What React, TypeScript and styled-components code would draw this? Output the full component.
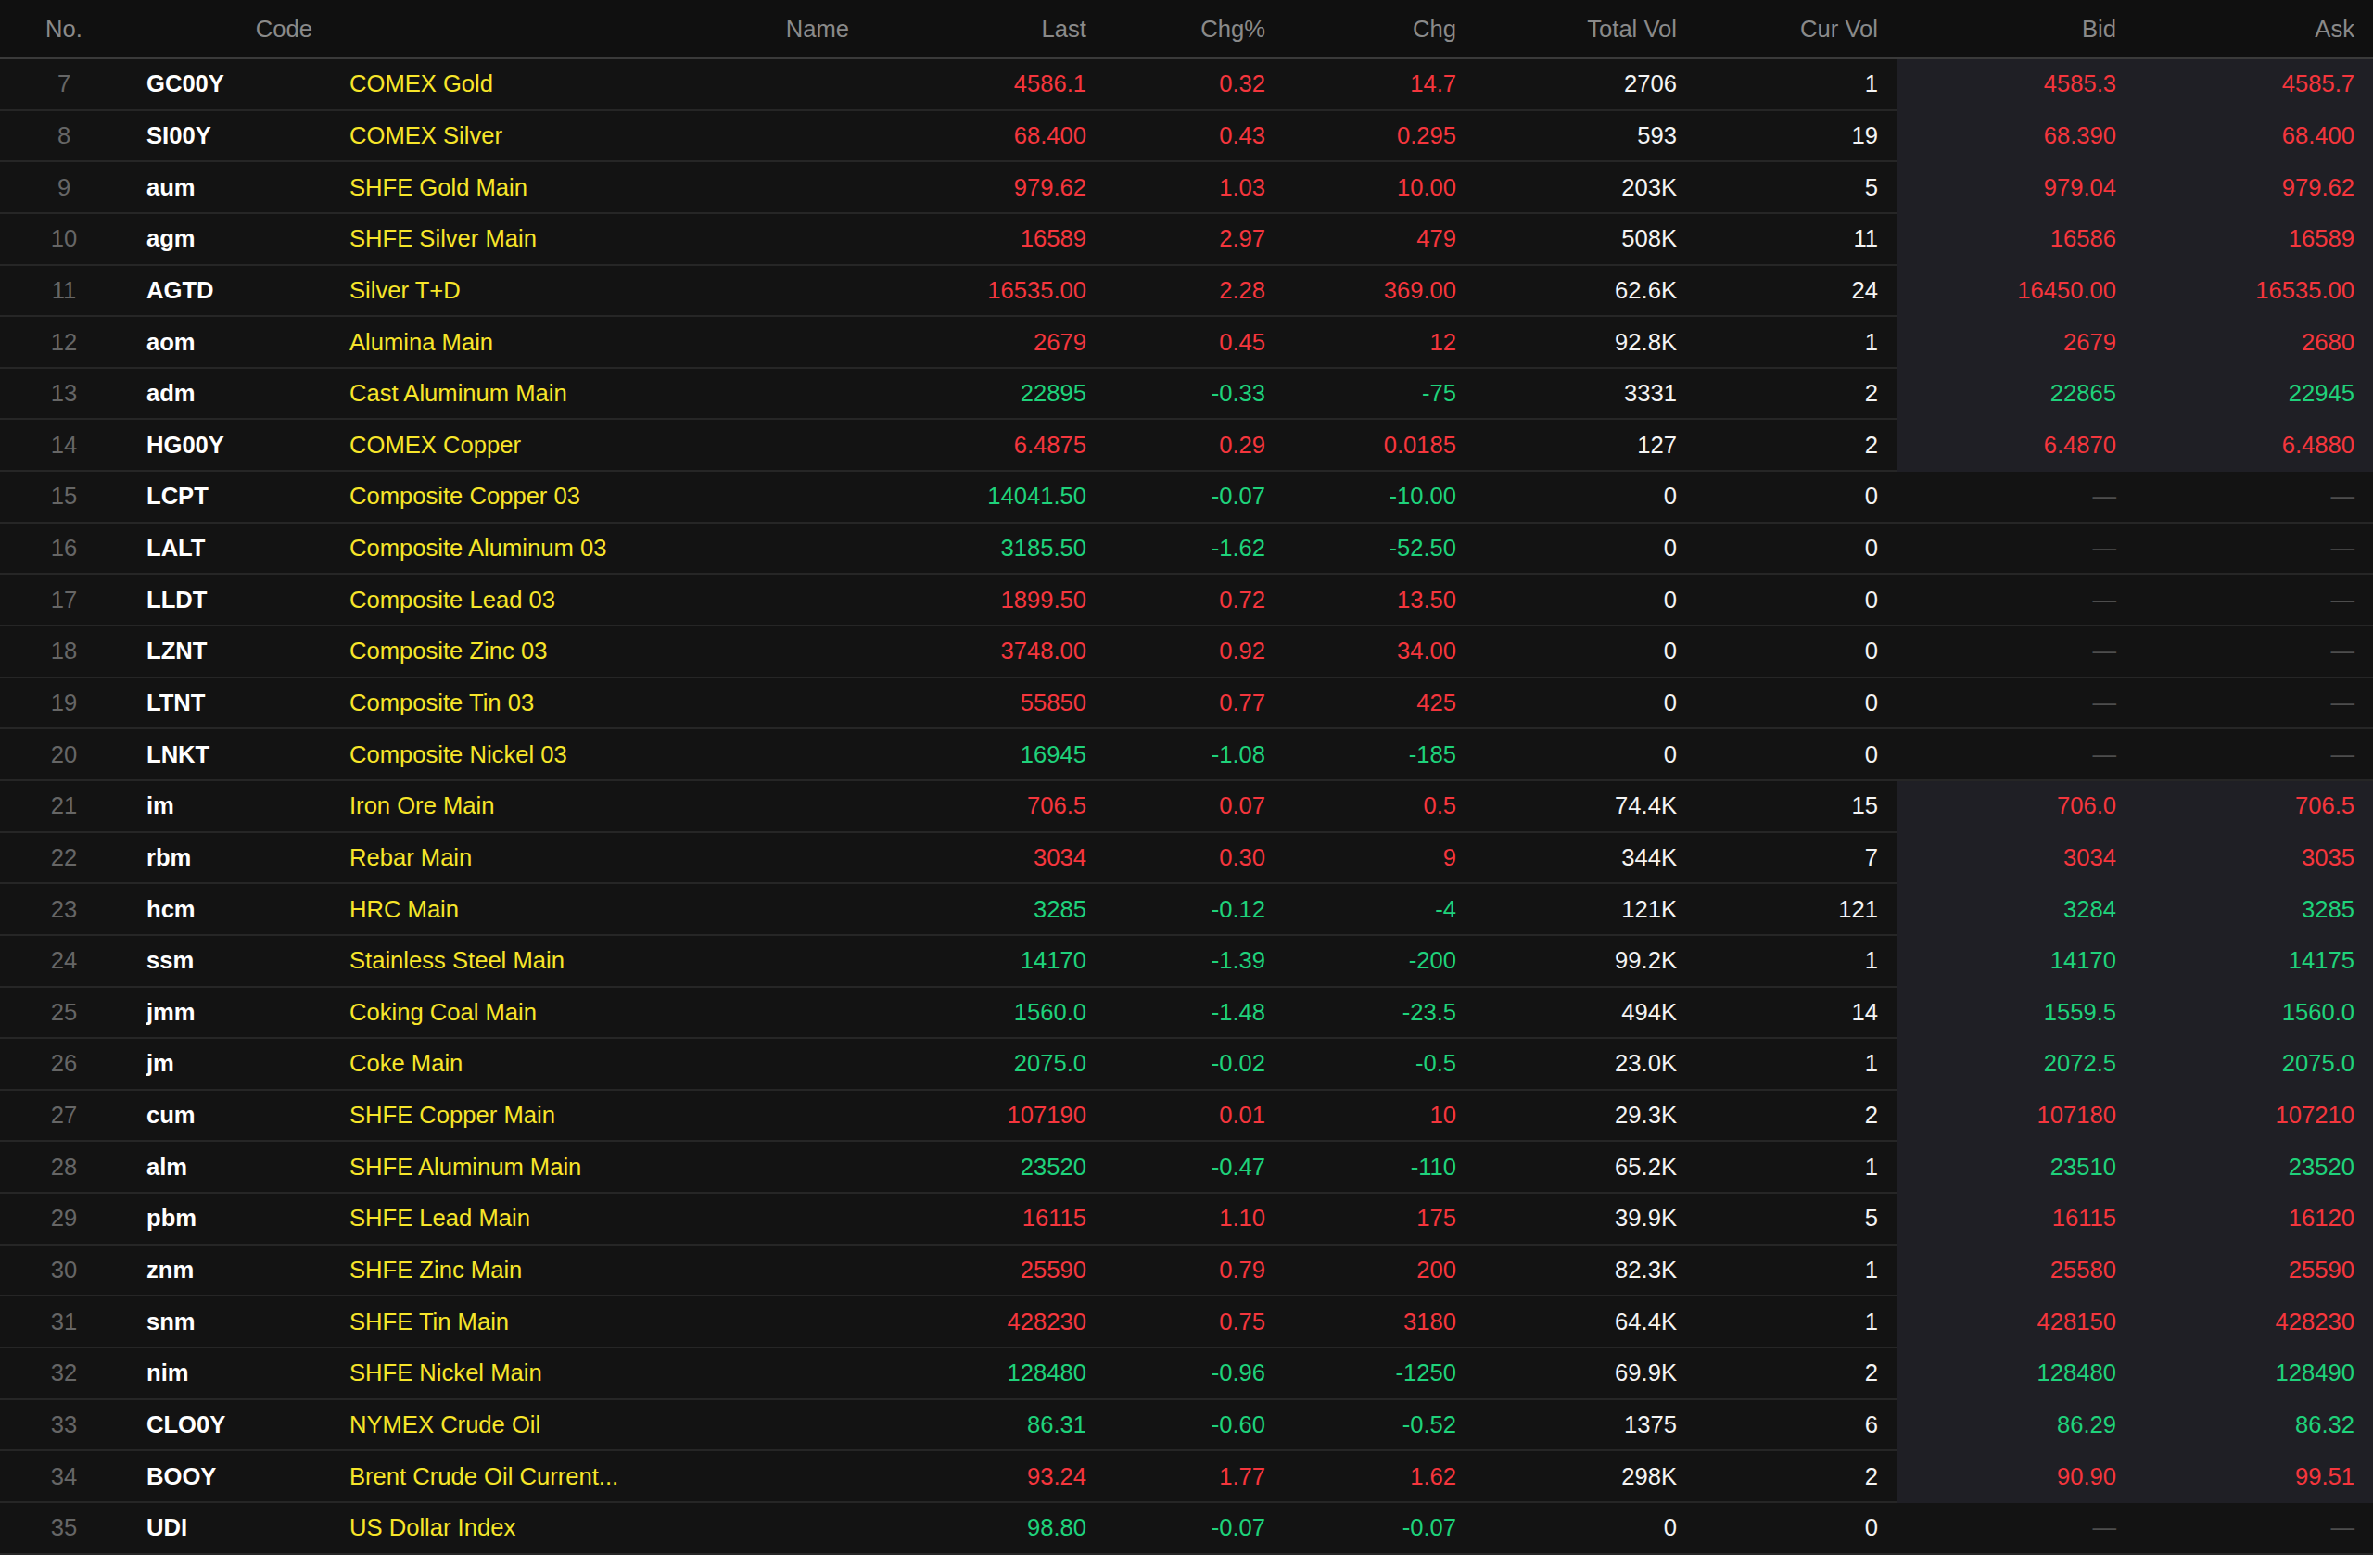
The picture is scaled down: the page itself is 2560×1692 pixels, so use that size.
import React from 'react'
import styled, { createGlobalStyle } from 'styled-components'

type Dir = 'up' | 'down'

type Quote = {
  no: number
  code: string
  name: string
  last: string
  pct: string
  chg: string
  totalVol: string
  curVol: string
  bid?: string
  ask?: string
  dir: Dir
}

const quotes: Quote[] = [
  { no: 7, code: 'GC00Y', name: 'COMEX Gold', last: '4586.1', pct: '0.32', chg: '14.7', totalVol: '2706', curVol: '1', bid: '4585.3', ask: '4585.7', dir: 'up' },
  { no: 8, code: 'SI00Y', name: 'COMEX Silver', last: '68.400', pct: '0.43', chg: '0.295', totalVol: '593', curVol: '19', bid: '68.390', ask: '68.400', dir: 'up' },
  { no: 9, code: 'aum', name: 'SHFE Gold Main', last: '979.62', pct: '1.03', chg: '10.00', totalVol: '203K', curVol: '5', bid: '979.04', ask: '979.62', dir: 'up' },
  { no: 10, code: 'agm', name: 'SHFE Silver Main', last: '16589', pct: '2.97', chg: '479', totalVol: '508K', curVol: '11', bid: '16586', ask: '16589', dir: 'up' },
  { no: 11, code: 'AGTD', name: 'Silver T+D', last: '16535.00', pct: '2.28', chg: '369.00', totalVol: '62.6K', curVol: '24', bid: '16450.00', ask: '16535.00', dir: 'up' },
  { no: 12, code: 'aom', name: 'Alumina Main', last: '2679', pct: '0.45', chg: '12', totalVol: '92.8K', curVol: '1', bid: '2679', ask: '2680', dir: 'up' },
  { no: 13, code: 'adm', name: 'Cast Aluminum Main', last: '22895', pct: '-0.33', chg: '-75', totalVol: '3331', curVol: '2', bid: '22865', ask: '22945', dir: 'down' },
  { no: 14, code: 'HG00Y', name: 'COMEX Copper', last: '6.4875', pct: '0.29', chg: '0.0185', totalVol: '127', curVol: '2', bid: '6.4870', ask: '6.4880', dir: 'up' },
  { no: 15, code: 'LCPT', name: 'Composite Copper 03', last: '14041.50', pct: '-0.07', chg: '-10.00', totalVol: '0', curVol: '0', dir: 'down' },
  { no: 16, code: 'LALT', name: 'Composite Aluminum 03', last: '3185.50', pct: '-1.62', chg: '-52.50', totalVol: '0', curVol: '0', dir: 'down' },
  { no: 17, code: 'LLDT', name: 'Composite Lead 03', last: '1899.50', pct: '0.72', chg: '13.50', totalVol: '0', curVol: '0', dir: 'up' },
  { no: 18, code: 'LZNT', name: 'Composite Zinc 03', last: '3748.00', pct: '0.92', chg: '34.00', totalVol: '0', curVol: '0', dir: 'up' },
  { no: 19, code: 'LTNT', name: 'Composite Tin 03', last: '55850', pct: '0.77', chg: '425', totalVol: '0', curVol: '0', dir: 'up' },
  { no: 20, code: 'LNKT', name: 'Composite Nickel 03', last: '16945', pct: '-1.08', chg: '-185', totalVol: '0', curVol: '0', dir: 'down' },
  { no: 21, code: 'im', name: 'Iron Ore Main', last: '706.5', pct: '0.07', chg: '0.5', totalVol: '74.4K', curVol: '15', bid: '706.0', ask: '706.5', dir: 'up' },
  { no: 22, code: 'rbm', name: 'Rebar Main', last: '3034', pct: '0.30', chg: '9', totalVol: '344K', curVol: '7', bid: '3034', ask: '3035', dir: 'up' },
  { no: 23, code: 'hcm', name: 'HRC Main', last: '3285', pct: '-0.12', chg: '-4', totalVol: '121K', curVol: '121', bid: '3284', ask: '3285', dir: 'down' },
  { no: 24, code: 'ssm', name: 'Stainless Steel Main', last: '14170', pct: '-1.39', chg: '-200', totalVol: '99.2K', curVol: '1', bid: '14170', ask: '14175', dir: 'down' },
  { no: 25, code: 'jmm', name: 'Coking Coal Main', last: '1560.0', pct: '-1.48', chg: '-23.5', totalVol: '494K', curVol: '14', bid: '1559.5', ask: '1560.0', dir: 'down' },
  { no: 26, code: 'jm', name: 'Coke Main', last: '2075.0', pct: '-0.02', chg: '-0.5', totalVol: '23.0K', curVol: '1', bid: '2072.5', ask: '2075.0', dir: 'down' },
  { no: 27, code: 'cum', name: 'SHFE Copper Main', last: '107190', pct: '0.01', chg: '10', totalVol: '29.3K', curVol: '2', bid: '107180', ask: '107210', dir: 'up' },
  { no: 28, code: 'alm', name: 'SHFE Aluminum Main', last: '23520', pct: '-0.47', chg: '-110', totalVol: '65.2K', curVol: '1', bid: '23510', ask: '23520', dir: 'down' },
  { no: 29, code: 'pbm', name: 'SHFE Lead Main', last: '16115', pct: '1.10', chg: '175', totalVol: '39.9K', curVol: '5', bid: '16115', ask: '16120', dir: 'up' },
  { no: 30, code: 'znm', name: 'SHFE Zinc Main', last: '25590', pct: '0.79', chg: '200', totalVol: '82.3K', curVol: '1', bid: '25580', ask: '25590', dir: 'up' },
  { no: 31, code: 'snm', name: 'SHFE Tin Main', last: '428230', pct: '0.75', chg: '3180', totalVol: '64.4K', curVol: '1', bid: '428150', ask: '428230', dir: 'up' },
  { no: 32, code: 'nim', name: 'SHFE Nickel Main', last: '128480', pct: '-0.96', chg: '-1250', totalVol: '69.9K', curVol: '2', bid: '128480', ask: '128490', dir: 'down' },
  { no: 33, code: 'CLO0Y', name: 'NYMEX Crude Oil', last: '86.31', pct: '-0.60', chg: '-0.52', totalVol: '1375', curVol: '6', bid: '86.29', ask: '86.32', dir: 'down' },
  { no: 34, code: 'BOOY', name: 'Brent Crude Oil Current...', last: '93.24', pct: '1.77', chg: '1.62', totalVol: '298K', curVol: '2', bid: '90.90', ask: '99.51', dir: 'up' },
  { no: 35, code: 'UDI', name: 'US Dollar Index', last: '98.80', pct: '-0.07', chg: '-0.07', totalVol: '0', curVol: '0', dir: 'down' },
]

const colors = {
  bg: '#131313',
  headerBg: '#101010',
  rowLine: '#262626',
  headerLine: '#3a3a3a',
  quoteBg: '#1f1f25',
  header: '#8a8a8a',
  index: '#666666',
  white: '#f4f4f4',
  name: '#f7e52a',
  up: '#f5363d',
  down: '#1fd27b',
  dash: '#4d4d4d',
}

const columns = '138px 219px 579px 256px 193px 206px 238px 217px 257px 257px'

const GlobalStyle = createGlobalStyle`
  body {
    margin: 0;
    background: #ffffff;
    font-family: "Liberation Sans", Arial, sans-serif;
  }
`

export default function App() {
  return (
    <>
      <GlobalStyle />
      <Board>
        <HeaderRow>
          <HeadCell $align="center">No.</HeadCell>
          <HeadCell>Code</HeadCell>
          <HeadCell>Name</HeadCell>
          <HeadCell>Last</HeadCell>
          <HeadCell>Chg%</HeadCell>
          <HeadCell>Chg</HeadCell>
          <HeadCell>Total Vol</HeadCell>
          <HeadCell>Cur Vol</HeadCell>
          <HeadCell>Bid</HeadCell>
          <HeadCell>Ask</HeadCell>
        </HeaderRow>
        {quotes.map((q) => {
          const tone = q.dir === 'up' ? colors.up : colors.down
          const quoted = !!q.bid
          return (
            <Row key={q.no}>
              <IndexCell>{q.no}</IndexCell>
              <CodeCell>{q.code}</CodeCell>
              <NameCell>{q.name}</NameCell>
              <Cell $color={tone}>{q.last}</Cell>
              <Cell $color={tone}>{q.pct}</Cell>
              <Cell $color={tone}>{q.chg}</Cell>
              <Cell>{q.totalVol}</Cell>
              <Cell>{q.curVol}</Cell>
              <QuoteCell $quoted={quoted} $color={quoted ? tone : colors.dash}>
                {q.bid ?? '—'}
              </QuoteCell>
              <QuoteCell $quoted={quoted} $color={quoted ? tone : colors.dash}>
                {q.ask ?? '—'}
              </QuoteCell>
            </Row>
          )
        })}
      </Board>
    </>
  )
}

const Board = styled.div`
  width: 2560px;
  background: ${colors.bg};
  font-size: 25.6px;
`

const HeaderRow = styled.div`
  display: grid;
  grid-template-columns: ${columns};
  height: 62px;
  background: ${colors.headerBg};
  border-bottom: 2px solid ${colors.headerLine};
`

const HeadCell = styled.div<{ $align?: 'center' | 'right' }>`
  display: flex;
  align-items: center;
  justify-content: ${({ $align }) => ($align === 'center' ? 'center' : 'flex-end')};
  padding: 0 20px;
  color: ${colors.header};
  white-space: nowrap;
`

const Row = styled.div`
  display: grid;
  grid-template-columns: ${columns};
  height: 55.65px;
`

const Cell = styled.div<{ $color?: string }>`
  display: flex;
  align-items: center;
  justify-content: flex-end;
  padding: 0 20px;
  color: ${({ $color }) => $color ?? colors.white};
  border-bottom: 2px solid ${colors.rowLine};
  white-space: nowrap;
  overflow: hidden;
`

const IndexCell = styled(Cell)`
  justify-content: center;
  color: ${colors.index};
`

const CodeCell = styled(Cell)`
  justify-content: flex-start;
  font-weight: 700;
  color: #ffffff;
`

const NameCell = styled(Cell)`
  justify-content: flex-start;
  color: ${colors.name};
`

const QuoteCell = styled(Cell)<{ $quoted: boolean }>`
  background: ${({ $quoted }) => ($quoted ? colors.quoteBg : 'transparent')};
  border-bottom-color: ${({ $quoted }) => ($quoted ? colors.quoteBg : colors.rowLine)};
`
